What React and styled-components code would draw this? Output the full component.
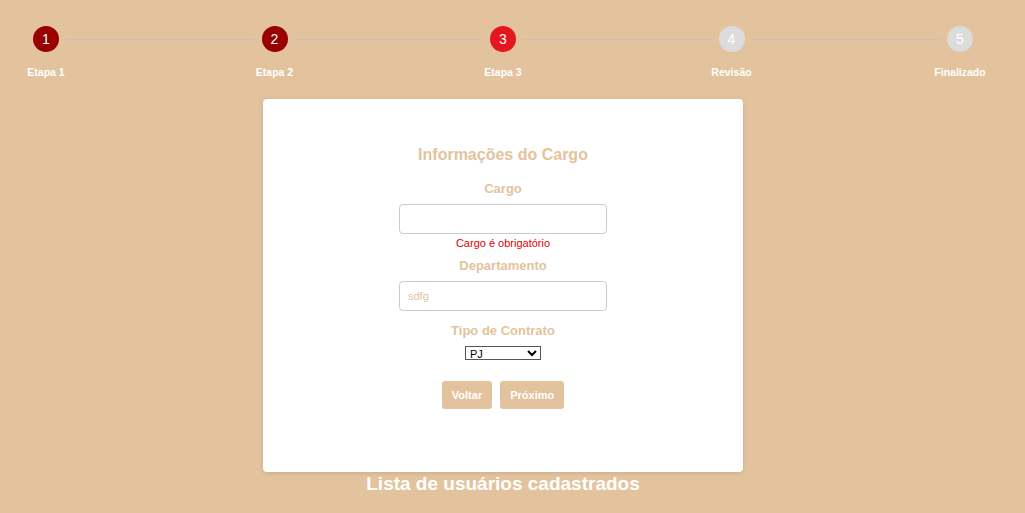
import React from "react";
import styled, { createGlobalStyle } from "styled-components";

const TAN = "#e3c39d";

const Global = createGlobalStyle`
  html, body { margin: 0; padding: 0; background: ${TAN}; }
  body { font-family: "Liberation Sans", Arial, sans-serif; }
`;

const Page = styled.div`
  width: 1006px;
  display: flex;
  flex-direction: column;
  align-items: center;
`;

const Stepper = styled.div`
  align-self: stretch;
  display: flex;
  align-items: flex-start;
  padding: 26px 26px 0;
`;

const Step = styled.div`
  width: 40px;
  display: flex;
  flex-direction: column;
  align-items: center;
  flex-shrink: 0;
`;

const Circle = styled.div`
  width: 26px;
  height: 26px;
  border-radius: 50%;
  background: ${(p) => p.$bg};
  color: #fff;
  font-size: 14px;
  display: flex;
  align-items: center;
  justify-content: center;
`;

const StepLabel = styled.div`
  margin-top: 13px;
  font-size: 10.5px;
  font-weight: bold;
  color: #fff;
  white-space: nowrap;
  line-height: 14px;
`;

const Connector = styled.div`
  flex: 1;
  height: 1px;
  margin-top: 13px;
  background: #c9bfb3;
`;

const Card = styled.div`
  margin-top: 20px;
  width: 480px;
  height: 373px;
  box-sizing: border-box;
  background: #fff;
  border-radius: 4px;
  box-shadow: 0 1px 4px rgba(0, 0, 0, 0.12);
  padding-top: 47px;
  display: flex;
  flex-direction: column;
  align-items: center;
`;

const Title = styled.h3`
  margin: 0 0 16px;
  font-size: 16px;
  line-height: 18px;
  font-weight: bold;
  color: ${TAN};
`;

const Field = styled.div`
  display: flex;
  flex-direction: column;
  align-items: center;
  margin-bottom: 11px;
`;

const Label = styled.label`
  font-size: 13px;
  line-height: 16px;
  font-weight: bold;
  color: ${TAN};
  margin: 1px 0 7px;
`;

const Input = styled.input`
  width: 208px;
  height: 30px;
  box-sizing: border-box;
  border: 1px solid #cccccc;
  border-radius: 4px;
  padding: 0 8px;
  font-family: "Liberation Sans", Arial, sans-serif;
  font-size: 11px;
  color: ${TAN};
  outline: none;
`;

const Error = styled.div`
  margin: 3px 0 -4px;
  font-size: 11px;
  line-height: 13px;
  color: #e00000;
`;

const Select = styled.select`
  width: 76px;
  height: 14px;
  box-sizing: border-box;
  font-family: "Liberation Sans", Arial, sans-serif;
  font-size: 11px;
  padding: 0;
  border: 1px solid #555;
  border-radius: 0;
  background: #fff;
  color: #000;
`;

const Buttons = styled.div`
  display: flex;
  gap: 8px;
  margin-top: 10px;
`;

const Button = styled.button`
  height: 28px;
  padding: 0 10px;
  border: none;
  border-radius: 3px;
  background: ${TAN};
  color: #fff;
  font-family: "Liberation Sans", Arial, sans-serif;
  font-size: 11px;
  font-weight: bold;
`;

const ListTitle = styled.h2`
  margin: 0;
  font-size: 19px;
  line-height: 23px;
  font-weight: bold;
  color: #fff;
`;

const steps = [
  { n: 1, label: "Etapa 1", bg: "#990000" },
  { n: 2, label: "Etapa 2", bg: "#990000" },
  { n: 3, label: "Etapa 3", bg: "#e5161c" },
  { n: 4, label: "Revisão", bg: "#dcdcdc" },
  { n: 5, label: "Finalizado", bg: "#dcdcdc" },
];

export default function App() {
  return (
    <>
      <Global />
      <Page>
        <Stepper>
          {steps.map((s, i) => (
            <React.Fragment key={s.n}>
              {i > 0 && <Connector />}
              <Step>
                <Circle $bg={s.bg}>{s.n}</Circle>
                <StepLabel>{s.label}</StepLabel>
              </Step>
            </React.Fragment>
          ))}
        </Stepper>
        <Card>
          <Title>Informações do Cargo</Title>
          <Field>
            <Label>Cargo</Label>
            <Input defaultValue="" />
            <Error>Cargo é obrigatório</Error>
          </Field>
          <Field>
            <Label>Departamento</Label>
            <Input defaultValue="sdfg" />
          </Field>
          <Field>
            <Label>Tipo de Contrato</Label>
            <Select defaultValue="PJ">
              <option value="CLT">CLT</option>
              <option value="PJ">PJ</option>
            </Select>
          </Field>
          <Buttons>
            <Button>Voltar</Button>
            <Button>Próximo</Button>
          </Buttons>
        </Card>
        <ListTitle>Lista de usuários cadastrados</ListTitle>
      </Page>
    </>
  );
}
